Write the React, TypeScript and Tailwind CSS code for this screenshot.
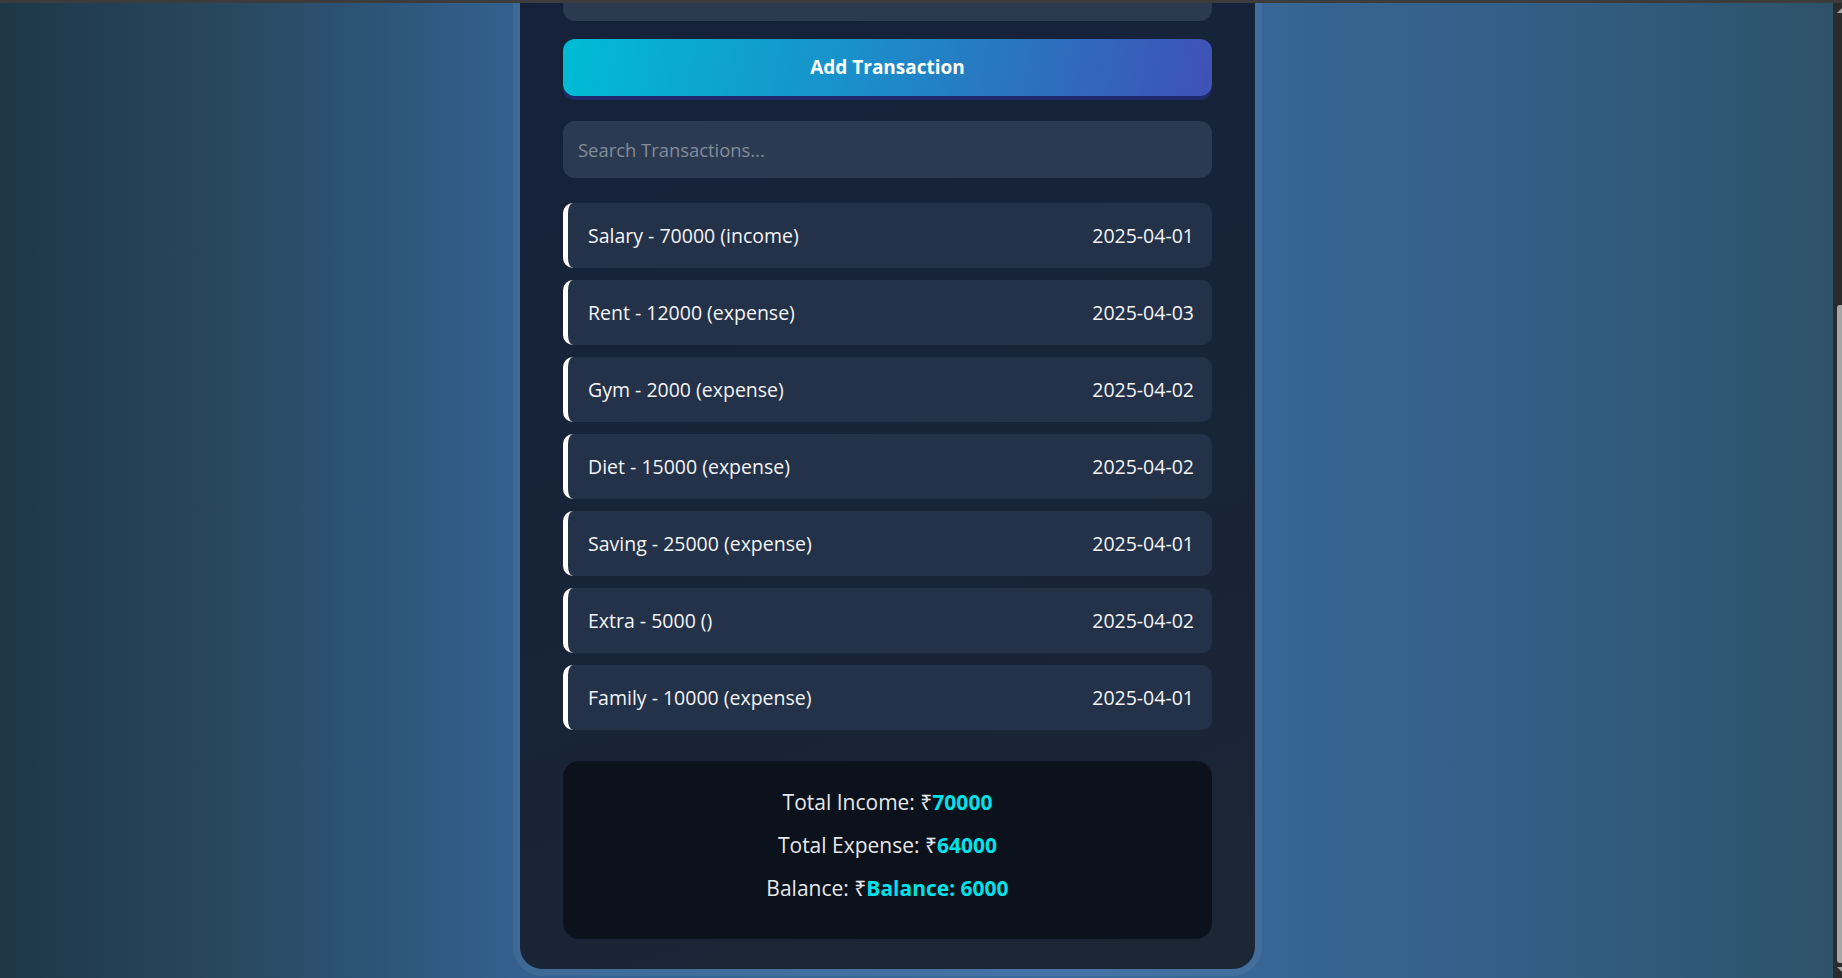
const transactions = [
  { text: "Salary - 70000 (income)", date: "2025-04-01" },
  { text: "Rent - 12000 (expense)", date: "2025-04-03" },
  { text: "Gym - 2000 (expense)", date: "2025-04-02" },
  { text: "Diet - 15000 (expense)", date: "2025-04-02" },
  { text: "Saving - 25000 (expense)", date: "2025-04-01" },
  { text: "Extra - 5000 ()", date: "2025-04-02" },
  { text: "Family - 10000 (expense)", date: "2025-04-01" },
];

const App = () => {
  return (
    <div className="h-[978px] w-full overflow-hidden flex flex-col font-['Open_Sans','Noto_Sans',sans-serif] text-white">
      <div className="h-[3px] bg-[#3c3c3c] shrink-0" />
      <div className="flex flex-1 min-h-0">
        {/* page */}
        <main className="flex-1 overflow-hidden bg-[linear-gradient(90deg,#1f3747_0%,#284960_13%,#33608f_28%,#3a6ba0_58%,#34608a_80%,#2d5269_100%)]">
          <div className="ml-[513px] mt-[-86px] w-[749px] p-[7px]">
            <div className="rounded-[22px] bg-[linear-gradient(160deg,#15213a_0%,#182437_60%,#1b2735_100%)] px-[43px] pt-[40px] pb-[30px] shadow-[0_0_0_7px_rgba(255,255,255,0.06)]">
              <input
                className="block w-full h-[57px] rounded-[12px] bg-[#2c3a50] outline-none"
                aria-label="Amount"
              />

              <button className="mt-[18px] w-full h-[57px] rounded-[12px] bg-[linear-gradient(100deg,#00bcd4_0%,#1a8fca_45%,#3f51b5_100%)] shadow-[0_4px_0_#1e2a6b] text-[19px] font-bold">
                Add Transaction
              </button>

              <input
                placeholder="Search Transactions..."
                className="mt-[25px] block w-full h-[57px] rounded-[12px] bg-[#2b3a50] px-[15px] text-[18.4px] text-white placeholder:text-[#838c9b] outline-none"
              />

              <ul className="mt-[25px] flex flex-col gap-[12px]">
                {transactions.map((t) => (
                  <li
                    key={t.text}
                    className="h-[65px] flex items-center justify-between rounded-[10px] border-l-[5px] border-white bg-[#233149] pl-[20px] pr-[18px] text-[19.5px] text-[#f3f4f6]"
                  >
                    <span>{t.text}</span>
                    <span>{t.date}</span>
                  </li>
                ))}
              </ul>

              <div className="mt-[31px] h-[178px] rounded-[16px] bg-[#0b121c] pt-[26px] flex flex-col items-center gap-[13px] text-[21px] text-[#e6e8eb] leading-[30px]">
                <p>
                  Total Income: ₹<span className="font-bold text-[#00e1ea]">70000</span>
                </p>
                <p>
                  Total Expense: ₹<span className="font-bold text-[#00e1ea]">64000</span>
                </p>
                <p>
                  Balance: ₹<span className="font-bold text-[#00e1ea]">Balance: 6000</span>
                </p>
              </div>
            </div>
          </div>
        </main>

        {/* scrollbar */}
        <div className="w-[9px] shrink-0 bg-[#2b2b2b] flex flex-col items-end">
          <div className="mt-[5px] w-0 h-0 border-l-[5px] border-b-[5px] border-l-transparent border-b-[#a3a3a3]" />
          <div className="mt-[292px] w-[5px] h-[658px] rounded-tl-[3px] rounded-bl-[3px] bg-[#a6a6a6]" />
          <div className="mt-[4px] w-0 h-0 border-l-[5px] border-t-[5px] border-l-transparent border-t-[#a3a3a3]" />
        </div>
      </div>
    </div>
  );
};

export default App;
